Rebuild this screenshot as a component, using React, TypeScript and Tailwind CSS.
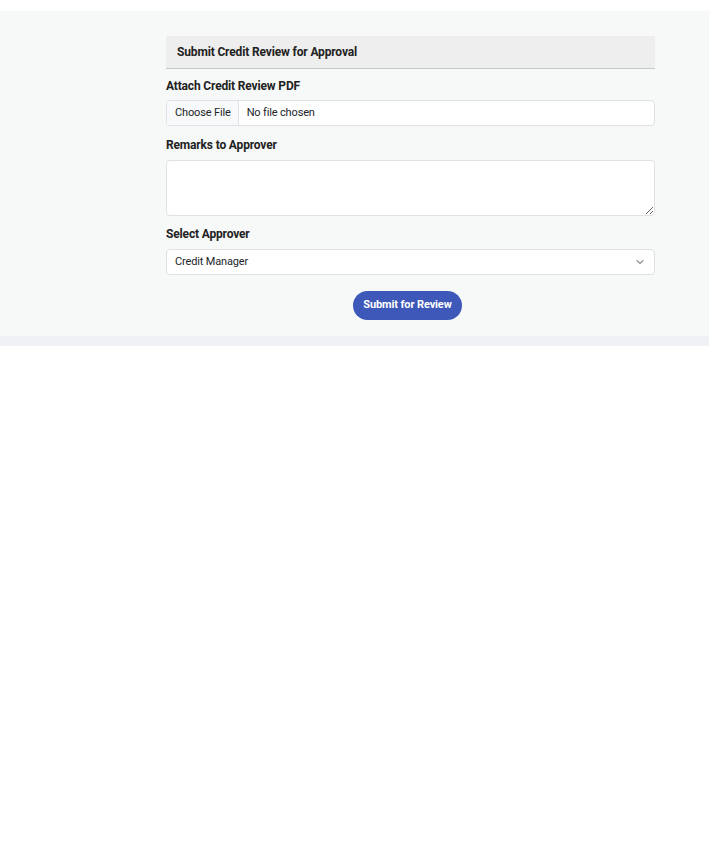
import React from "react";

export default function App() {
  return (
    <div className="min-h-[842px] bg-white" style={{ fontFamily: "Roboto, 'Liberation Sans', sans-serif" }}>
      <div className="h-[11px]" />
      <div className="bg-[#f7f8f8] pt-[25px] pb-[16px]">
        <div className="ml-[166px] w-[489px]">
          <div className="h-[33px] bg-[#eeeeee] border-b border-[#c4c8c8] flex items-center pl-[11px]">
            <span className="text-[12px] font-bold tracking-[-0.15px] text-[#222] leading-none">Submit Credit Review for Approval</span>
          </div>
          <div className="mt-[8px] h-[18px] flex items-center text-[12px] font-bold tracking-[-0.16px] text-[#222]">Attach Credit Review PDF</div>
          <div className="mt-[5px] h-[26px] flex items-stretch border border-[#dee2e6] rounded-[4px] bg-white overflow-hidden text-[11px] tracking-[-0.15px] text-[#212529]">
            <div className="bg-[#f8f9fa] border-r border-[#dee2e6] flex items-center pl-[8px] pr-[7px]">Choose File</div>
            <div className="flex items-center px-[8px]">No file chosen</div>
          </div>
          <div className="mt-[10px] h-[18px] flex items-center text-[12px] font-bold tracking-[-0.16px] text-[#222]">Remarks to Approver</div>
          <textarea className="mt-[6px] block w-full h-[56px] border border-[#dee2e6] rounded-[4px] bg-white resize-y outline-none" />
          <div className="mt-[9px] h-[18px] flex items-center text-[12px] font-bold tracking-[-0.16px] text-[#222]">Select Approver</div>
          <div className="mt-[6px] h-[26px] flex items-center justify-between border border-[#dee2e6] rounded-[4px] bg-white pl-[8px] pr-[10px] text-[11px] tracking-[-0.15px] text-[#212529]">
            <span>Credit Manager</span>
            <svg width="8" height="8" viewBox="0 0 16 16" fill="none" stroke="#343a40" strokeWidth="2" strokeLinecap="round" strokeLinejoin="round">
              <path d="M2 5l6 6 6-6" />
            </svg>
          </div>
          <div className="mt-[16px] flex justify-center">
            <button className="h-[29px] w-[109px] rounded-full bg-[#3d58b8] text-white text-[11px] font-bold tracking-[-0.12px] -ml-[6px]">Submit for Review</button>
          </div>
        </div>
      </div>
      <div className="h-[10px] bg-[#f0f1f5]" />
    </div>
  );
}
